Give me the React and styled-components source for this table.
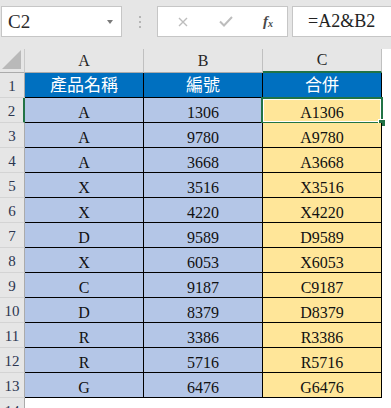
import React from 'react';
import styled, { createGlobalStyle } from 'styled-components';

const rows = [
  ['A', 1306], ['A', 9780], ['A', 3668], ['X', 3516], ['X', 4220], ['D', 9589],
  ['X', 6053], ['C', 9187], ['D', 8379], ['R', 3386], ['R', 5716], ['G', 6476],
];

const App = () => (
  <>
    <GlobalStyle />
    <Sheet>
      <FormulaBar>
        <NameBox>
          <span>C2</span>
          <DropArrow />
        </NameBox>
        <Grip>
          <i /><i /><i />
        </Grip>
        <ActionBox>
          <svg width="10" height="10" viewBox="0 0 10 10">
            <path d="M1 1 L9 9 M9 1 L1 9" stroke="#bdbdbd" strokeWidth="1.4" fill="none" />
          </svg>
          <svg width="14" height="11" viewBox="0 0 14 11">
            <path d="M1 5.5 L5 9.5 L13 1" stroke="#bdbdbd" strokeWidth="2" fill="none" />
          </svg>
          <Fx>f<sub>x</sub></Fx>
        </ActionBox>
        <FormulaInput>=A2&amp;B2</FormulaInput>
      </FormulaBar>

      <HeaderRow>
        <Corner>
          <svg width="19" height="19" viewBox="0 0 19 19">
            <path d="M19 0 L19 19 L0 19 Z" fill="#b9b9b9" />
          </svg>
        </Corner>
        <ColHead>A</ColHead>
        <ColHead>B</ColHead>
        <ColHead $active>C</ColHead>
      </HeaderRow>

      <Row>
        <RowHead>1</RowHead>
        <Cell $fill="head">產品名稱</Cell>
        <Cell $fill="head">編號</Cell>
        <Cell $fill="head">合併</Cell>
      </Row>

      {rows.map(([code, num], i) => (
        <Row key={i}>
          <RowHead $active={i === 0}>{i + 2}</RowHead>
          <Cell $fill="blue">{code}</Cell>
          <Cell $fill="blue">{num}</Cell>
          <Cell $fill="yellow">
            {code}{num}
            {i === 0 && (
              <Selection>
                <Handle />
              </Selection>
            )}
          </Cell>
        </Row>
      ))}

      <Row>
        <RowHead $last>14</RowHead>
      </Row>
    </Sheet>
  </>
);

export default App;

const GlobalStyle = createGlobalStyle`
  html, body {
    margin: 0;
    padding: 0;
    background: #ffffff;
    overflow: hidden;
  }
  body {
    font-family: "Liberation Serif", "Noto Sans CJK TC", serif;
    color: #111;
  }
`;

const Sheet = styled.div`
  width: 391px;
  height: 408px;
  overflow: hidden;
`;

const FormulaBar = styled.div`
  display: flex;
  align-items: flex-start;
  height: 49px;
  padding: 6px 0 0 1px;
  box-sizing: border-box;
  background: #e6e6e6;
`;

const Box = styled.div`
  height: 31px;
  box-sizing: border-box;
  background: #ffffff;
  border: 1px solid #c6c6c6;
  display: flex;
  align-items: center;
`;

const NameBox = styled(Box)`
  width: 121px;
  padding: 0 6px 0 6px;
  justify-content: space-between;
  font-size: 19px;
  color: #2a2a2a;
`;

const DropArrow = styled.span`
  width: 0;
  height: 0;
  margin-right: 2px;
  border-left: 3.5px solid transparent;
  border-right: 3.5px solid transparent;
  border-top: 4px solid #7a7a7a;
`;

const Grip = styled.div`
  width: 35px;
  height: 31px;
  display: flex;
  flex-direction: column;
  align-items: center;
  justify-content: center;
  gap: 3px;

  i {
    display: block;
    width: 2px;
    height: 2px;
    background: #b5b5b5;
  }
`;

const ActionBox = styled(Box)`
  width: 131px;
  padding: 0 14px 0 20px;
  justify-content: space-between;
`;

const Fx = styled.span`
  font-style: italic;
  font-size: 15px;
  color: #4a4a4a;
  font-weight: bold;

  sub {
    font-size: 10px;
    vertical-align: -1px;
  }
`;

const FormulaInput = styled(Box)`
  flex: 1;
  margin-left: 4px;
  margin-right: -2px;
  padding-left: 15px;
  font-size: 18px;
  color: #222;
`;

const HeaderRow = styled.div`
  display: flex;
  height: 24px;
`;

const Corner = styled.div`
  width: 25px;
  box-sizing: border-box;
  background: #e6e6e6;
  border-right: 1px solid #c9c9c9;
  border-bottom: 1px solid #ababab;
  display: flex;
  align-items: flex-end;
  justify-content: flex-end;
  padding: 0 3px 3px 0;
`;

const ColHead = styled.div`
  width: 119px;
  box-sizing: border-box;
  background: #e6e6e6;
  border-right: 1px solid #c0c0c0;
  border-bottom: ${(p) => (p.$active ? '2px solid #217346' : '1px solid #ababab')};
  display: flex;
  align-items: center;
  justify-content: center;
  font-size: 16px;
  color: #262626;
`;

const Row = styled.div`
  display: flex;
  height: 25px;
`;

const RowHead = styled.div`
  width: 25px;
  box-sizing: border-box;
  background: #e6e6e6;
  border-bottom: ${(p) => (p.$last ? 'none' : '1px solid #d4d4d4')};
  border-right: ${(p) => (p.$active ? '2px solid #217346' : '1px solid #ababab')};
  display: flex;
  align-items: ${(p) => (p.$last ? 'flex-start' : 'center')};
  justify-content: center;
  padding-top: ${(p) => (p.$last ? '5px' : '2px')};
  font-size: 15px;
  color: #2b3550;
`;

const fills = {
  head: '#0070c0',
  blue: '#b4c6e7',
  yellow: '#ffe699',
};

const Cell = styled.div`
  position: relative;
  width: 119px;
  box-sizing: border-box;
  background: ${(p) => fills[p.$fill]};
  border-right: 1px solid #000;
  border-bottom: 1px solid #000;
  display: flex;
  align-items: flex-end;
  justify-content: center;
  font-size: ${(p) => (p.$fill === 'head' ? '17px' : '16px')};
  color: ${(p) => (p.$fill === 'head' ? '#ffffff' : '#111')};
  padding-bottom: ${(p) => (p.$fill === 'head' ? '1px' : '0')};
`;

const Selection = styled.div`
  position: absolute;
  left: -2px;
  top: -1px;
  right: -2px;
  bottom: -2px;
  border: 2px solid #217346;
  box-shadow: inset 0 0 0 1px #ffffff;
`;

const Handle = styled.div`
  position: absolute;
  right: -5px;
  bottom: -5px;
  width: 6px;
  height: 6px;
  background: #217346;
  border: 1px solid #ffffff;
`;
